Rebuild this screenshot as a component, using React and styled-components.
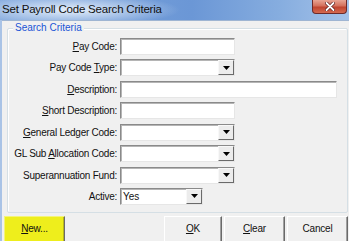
import React from "react";
import styled, { createGlobalStyle } from "styled-components";

const Global = createGlobalStyle`
  html, body { margin: 0; padding: 0; overflow: hidden; background: #6f9bd8; }
  * { box-sizing: border-box; }
`;

const Window = styled.div`
  width: 349px;
  height: 241px;
  overflow: hidden;
  display: flex;
  flex-direction: column;
  background: linear-gradient(to right, #a9c3e6, #8fb2e2);
  font-family: "Liberation Sans", Arial, sans-serif;
`;

const TitleBar = styled.div`
  height: 20px;
  flex: none;
  display: flex;
  align-items: flex-start;
  background:
    radial-gradient(ellipse 110px 16px at 70px 10px, rgba(235, 243, 252, 0.95), rgba(235, 243, 252, 0) 100%),
    linear-gradient(to right, #7fa6dc 0%, #6b97d6 55%, #86addf 80%, #a4c2e9 100%);
`;

const Title = styled.div`
  padding: 3px 0 0 2px;
  font-size: 11.5px;
  letter-spacing: -0.2px;
  color: #111;
  white-space: nowrap;
`;

const CloseButton = styled.div`
  margin-left: auto;
  margin-right: 2px;
  width: 35px;
  height: 14px;
  border: 1px solid #6d2a2a;
  border-top: none;
  border-radius: 0 0 4px 4px;
  background: linear-gradient(to bottom, #e8a493 0%, #d4705c 45%, #c0442f 55%, #d46a50 100%);
  display: flex;
  align-items: center;
  justify-content: center;
`;

const Client = styled.div`
  flex: 1;
  margin: 0 0 0 2px;
  background: #f0f0f0;
  border-top: 1px solid #9fb5d2;
  display: flex;
  flex-direction: column;
`;

const GroupBox = styled.div`
  position: relative;
  margin: 7px 1px 0 5px;
  border: 1px solid #d5dfe5;
  box-shadow: inset 1px 1px 0 #ffffff;
  border-radius: 2px;
  padding: 9px 0 7px 0;
`;

const Legend = styled.div`
  position: absolute;
  top: -7px;
  left: 5px;
  padding: 0 2px;
  background: #f0f0f0;
  color: #1a55d6;
  font-size: 10px;
  line-height: 12px;
`;

const Form = styled.div`
  display: grid;
  grid-template-columns: 109px auto;
  column-gap: 3px;
  row-gap: 4.43px;
  align-items: center;
`;

const Label = styled.div`
  text-align: right;
  font-size: 10px;
  letter-spacing: -0.25px;
  color: #111;
  white-space: nowrap;
`;

const Mn = styled.span`
  text-decoration: underline;
  text-underline-offset: 1px;
`;

const Sunken = styled.div`
  width: ${(p) => p.$w}px;
  height: 17px;
  background: #fff;
  border-top: 1px solid #8a8a8a;
  border-left: 1px solid #8a8a8a;
  border-right: 1px solid #e6e6e6;
  border-bottom: 1px solid #e6e6e6;
  box-shadow: inset 1px 1px 0 #b5b5b5;
  display: flex;
  align-items: center;
`;

const Value = styled.div`
  flex: 1;
  padding-left: 2px;
  font-size: 10px;
  color: #111;
`;

const DropButton = styled.div`
  width: 16px;
  height: 15px;
  background: #ececec;
  border-top: 1px solid #f8f8f8;
  border-left: 1px solid #f8f8f8;
  border-right: 1px solid #6a6a6a;
  border-bottom: 1px solid #6a6a6a;
  display: flex;
  align-items: center;
  justify-content: center;
`;

const Arrow = () => (
  <svg width="7" height="4" viewBox="0 0 7 4">
    <path d="M0 0H7L3.5 4Z" fill="#000" />
  </svg>
);

const Combo = ({ w, value }) => (
  <Sunken $w={w}>
    <Value>{value}</Value>
    <DropButton>
      <Arrow />
    </DropButton>
  </Sunken>
);

const ButtonRow = styled.div`
  display: flex;
  gap: 2px;
  margin: 3px 0 0 2px;
`;

const Button = styled.div`
  width: ${(p) => p.$w}px;
  height: 27px;
  flex: none;
  margin-left: ${(p) => p.$ml || 0}px;
  background: ${(p) => (p.$hl ? "#eeee1c" : "#f0f0f0")};
  border-top: 1px solid ${(p) => (p.$hl ? "#f4f47a" : "#ffffff")};
  border-left: 1px solid ${(p) => (p.$hl ? "#f4f47a" : "#ffffff")};
  border-right: 1px solid #6a6a6a;
  border-bottom: 1px solid #6a6a6a;
  box-shadow: inset -1px -1px 0 ${(p) => (p.$hl ? "#b8b81a" : "#a0a0a0")};
  display: flex;
  align-items: center;
  justify-content: center;
  padding-bottom: 1px;
  font-size: 10px;
  letter-spacing: -0.2px;
  color: #111;
`;

const rows = [
  { label: [<Mn key="m">P</Mn>, "ay Code:"], field: <Sunken $w={115} /> },
  { label: ["Pay Code ", <Mn key="m">T</Mn>, "ype:"], field: <Combo w={115} /> },
  { label: [<Mn key="m">D</Mn>, "escription:"], field: <Sunken $w={217} /> },
  { label: [<Mn key="m">S</Mn>, "hort Description:"], field: <Sunken $w={115} /> },
  { label: [<Mn key="m">G</Mn>, "eneral Ledger Code:"], field: <Combo w={115} /> },
  { label: ["GL Sub ", <Mn key="m">A</Mn>, "llocation Code:"], field: <Combo w={115} /> },
  { label: ["Superannuation Fund:"], field: <Combo w={115} /> },
  { label: ["Active:"], field: <Combo w={83} value="Yes" /> },
];

export default function App() {
  return (
    <>
      <Global />
      <Window>
        <TitleBar>
          <Title>Set Payroll Code Search Criteria</Title>
          <CloseButton>
            <svg width="10" height="9" viewBox="0 0 10 9">
              <path d="M1.5 1L8.5 8M8.5 1L1.5 8" stroke="#5a1a1a" strokeWidth="3.2" strokeLinecap="round" />
              <path d="M1.5 1L8.5 8M8.5 1L1.5 8" stroke="#ffffff" strokeWidth="1.8" strokeLinecap="round" />
            </svg>
          </CloseButton>
        </TitleBar>
        <Client>
          <GroupBox>
            <Legend>Search Criteria</Legend>
            <Form>
              {rows.map((r, i) => (
                <React.Fragment key={i}>
                  <Label>{r.label}</Label>
                  <div>{r.field}</div>
                </React.Fragment>
              ))}
            </Form>
          </GroupBox>
          <ButtonRow>
            <Button $w={61} $hl>
              <span><Mn>N</Mn>ew...</span>
            </Button>
            <Button $w={58} $ml={97}>
              <span><Mn>O</Mn>K</span>
            </Button>
            <Button $w={61}>
              <span><Mn>C</Mn>lear</span>
            </Button>
            <Button $w={61}>
              <span>Cancel</span>
            </Button>
          </ButtonRow>
        </Client>
      </Window>
    </>
  );
}
